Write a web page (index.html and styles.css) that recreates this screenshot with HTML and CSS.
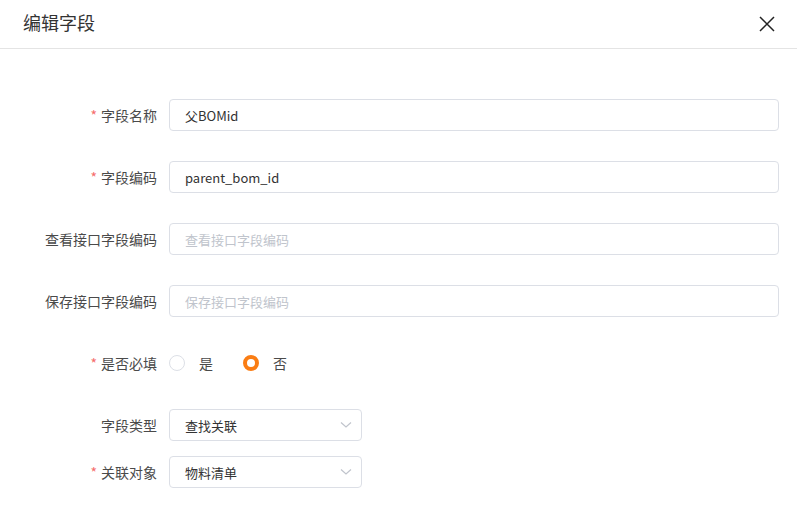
FILE: index.html
```html
<!DOCTYPE html>
<html lang="zh-CN">
<head>
    <meta charset="UTF-8">
    <title>编辑字段</title>
    <link rel="stylesheet" href="styles.css">
</head>
<body>
    <div class="dialog">
        <div class="dialog-header">
            <h1>编辑字段</h1>
            <button class="close-btn" aria-label="关闭">
                <svg width="16" height="16" viewBox="0 0 16 16"><path d="M1 1L15 15M15 1L1 15" stroke="#222" stroke-width="1.5" fill="none"/></svg>
            </button>
        </div>

        <form class="field-form">
            <div class="form-row">
                <label class="required">字段名称</label>
                <input type="text" value="父BOMid">
            </div>
            <div class="form-row">
                <label class="required">字段编码</label>
                <input type="text" value="parent_bom_id">
            </div>
            <div class="form-row">
                <label>查看接口字段编码</label>
                <input type="text" placeholder="查看接口字段编码">
            </div>
            <div class="form-row">
                <label>保存接口字段编码</label>
                <input type="text" placeholder="保存接口字段编码">
            </div>
            <div class="form-row">
                <label class="required">是否必填</label>
                <div class="radio-group">
                    <span class="radio"><i class="dot"></i>是</span>
                    <span class="radio checked"><i class="dot"></i>否</span>
                </div>
            </div>
            <div class="form-row">
                <label>字段类型</label>
                <div class="select">查找关联
                    <svg width="12" height="8" viewBox="0 0 12 8"><path d="M1 1.5L6 6L11 1.5" stroke="#c0c4cc" stroke-width="1.2" fill="none"/></svg>
                </div>
            </div>
            <div class="form-row tight">
                <label class="required">关联对象</label>
                <div class="select">物料清单
                    <svg width="12" height="8" viewBox="0 0 12 8"><path d="M1 1.5L6 6L11 1.5" stroke="#c0c4cc" stroke-width="1.2" fill="none"/></svg>
                </div>
            </div>
        </form>
    </div>
</body>
</html>
```

FILE: styles.css
```css
body {
    margin: 0;
    background-color: #fff;
    font-family: "Noto Sans CJK SC", "Noto Sans", sans-serif;
    color: #333;
}
.dialog {
    width: 797px;
}
.dialog-header {
    height: 48px;
    border-bottom: 1px solid #e4e4e4;
    display: flex;
    align-items: center;
    justify-content: space-between;
    padding: 0 22px 0 23px;
}
.dialog-header h1 {
    margin: 0;
    font-size: 18px;
    font-weight: normal;
    color: #333;
    line-height: 1;
    margin-top: -4px;
}
.close-btn {
    border: none;
    background: none;
    padding: 0;
    width: 16px;
    height: 16px;
    cursor: pointer;
    margin-top: -1px;
}
.field-form {
    padding: 50px 18px 0 0;
}
.form-row {
    display: flex;
    align-items: center;
    height: 32px;
    margin-bottom: 30px;
}
.form-row.tight {
    margin-top: -15px;
}
.form-row label {
    width: 157px;
    padding-right: 12px;
    text-align: right;
    font-size: 14px;
    color: #4a4a4a;
    flex-shrink: 0;
}
.form-row label.required::before {
    content: "*";
    color: #f56c6c;
    margin-right: 4px;
}
.form-row input {
    flex: 1;
    height: 32px;
    box-sizing: border-box;
    border: 1px solid #dcdfe6;
    border-radius: 4px;
    padding: 0 15px;
    font-family: inherit;
    font-size: 13px;
    color: #333;
    outline: none;
}
.form-row input::placeholder {
    color: #c0c4cc;
}
.radio-group {
    display: flex;
    align-items: center;
    gap: 30px;
    font-size: 14px;
    color: #4a4a4a;
}
.radio {
    display: flex;
    align-items: center;
}
.radio .dot {
    width: 16px;
    height: 16px;
    box-sizing: border-box;
    border: 1px solid #dcdfe6;
    border-radius: 50%;
    margin-right: 14px;
    background: #fff;
}
.radio.checked .dot {
    border: 4px solid #fa7d14;
}
.select {
    width: 193px;
    height: 32px;
    box-sizing: border-box;
    border: 1px solid #dcdfe6;
    border-radius: 4px;
    padding: 0 9px 0 15px;
    display: flex;
    align-items: center;
    justify-content: space-between;
    font-size: 13px;
    color: #333;
}
```
